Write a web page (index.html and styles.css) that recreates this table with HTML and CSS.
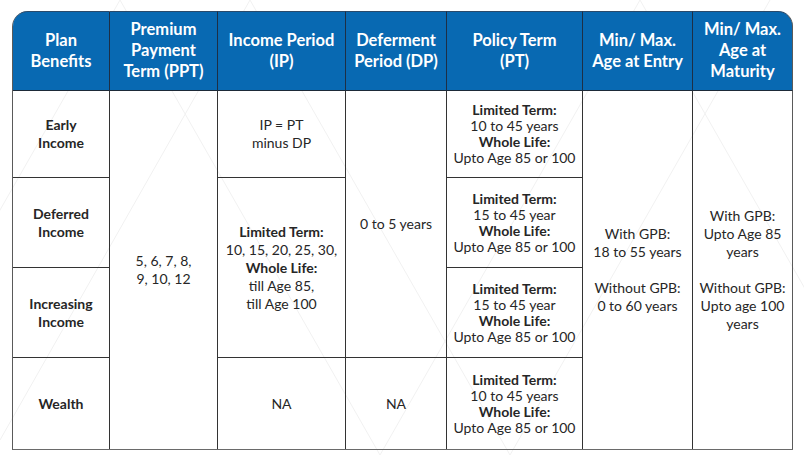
FILE: index.html
```html
<!DOCTYPE html>
<html lang="en">
<head>
<meta charset="utf-8">
<title>Plan Benefits</title>
<link rel="stylesheet" href="styles.css">
</head>
<body>
<div class="page">
  <svg class="bg-pattern" width="804" height="455" viewBox="0 0 804 455" aria-hidden="true">
    <g stroke="#f1f1f1" stroke-width="1" fill="none">
      <line x1="120" y1="0" x2="380" y2="455"/>
      <line x1="380" y1="455" x2="640" y2="0"/>
      <line x1="-140" y1="455" x2="120" y2="0"/>
      <line x1="640" y1="0" x2="900" y2="455"/>
      <line x1="250" y1="0" x2="0" y2="440"/>
      <line x1="250" y1="0" x2="510" y2="455"/>
      <line x1="510" y1="455" x2="770" y2="0"/>
    </g>
  </svg>
  <table class="plan">
    <colgroup>
      <col class="c1"><col class="c2"><col class="c3"><col class="c4"><col class="c5"><col class="c6"><col class="c7">
    </colgroup>
    <thead>
      <tr class="head">
        <th class="first">Plan<br>Benefits</th>
        <th>Premium<br>Payment<br>Term (PPT)</th>
        <th>Income Period<br>(IP)</th>
        <th>Deferment<br>Period (DP)</th>
        <th>Policy Term<br>(PT)</th>
        <th>Min/ Max.<br>Age at Entry</th>
        <th class="last">Min/ Max.<br>Age at<br>Maturity</th>
      </tr>
    </thead>
    <tbody>
      <tr class="r1">
        <td class="label">Early<br>Income</td>
        <td rowspan="4">5, 6, 7, 8,<br>9, 10, 12</td>
        <td>IP = PT<br>minus DP</td>
        <td rowspan="3">0 to 5 years</td>
        <td class="pt"><b>Limited Term:</b><br>10 to 45 years<br><b>Whole Life:</b><br>Upto Age 85 or 100</td>
        <td rowspan="4">With GPB:<br>18 to 55 years<br><br>Without GPB:<br>0 to 60 years</td>
        <td rowspan="4" class="lastcol">With GPB:<br>Upto Age 85<br>years<br><br>Without GPB:<br>Upto age 100<br>years</td>
      </tr>
      <tr class="r2">
        <td class="label">Deferred<br>Income</td>
        <td rowspan="2"><b>Limited Term:</b><br>10, 15, 20, 25, 30,<br><b>Whole Life:</b><br>till Age 85,<br>till Age 100</td>
        <td class="pt"><b>Limited Term:</b><br>15 to 45 year<br><b>Whole Life:</b><br>Upto Age 85 or 100</td>
      </tr>
      <tr class="r3">
        <td class="label">Increasing<br>Income</td>
        <td class="pt"><b>Limited Term:</b><br>15 to 45 year<br><b>Whole Life:</b><br>Upto Age 85 or 100</td>
      </tr>
      <tr class="r4">
        <td class="label">Wealth</td>
        <td>NA</td>
        <td>NA</td>
        <td class="pt"><b>Limited Term:</b><br>10 to 45 years<br><b>Whole Life:</b><br>Upto Age 85 or 100</td>
      </tr>
    </tbody>
  </table>
</div>
</body>
</html>
```

FILE: styles.css
```css
* { box-sizing: border-box; }

html, body {
  margin: 0;
  padding: 0;
  background: #ffffff;
}

.page {
  position: relative;
  width: 804px;
  height: 455px;
  padding: 11px 0 0 12px;
  font-family: Lato, "Noto Sans", sans-serif;
  color: #262626;
}

.bg-pattern {
  position: absolute;
  left: 0;
  top: 0;
  z-index: 0;
}

.plan {
  position: relative;
  z-index: 1;
  width: 780px;
  border-collapse: separate;
  border-spacing: 0;
  table-layout: fixed;
  border-left: 1.5px solid #5a5a5a;
  border-bottom: 1.5px solid #6a6a6a;
  border-top-left-radius: 16px;
  border-top-right-radius: 16px;
}

.c1 { width: 97px; }
.c2 { width: 108px; }
.c3 { width: 128px; }
.c4 { width: 101px; }
.c5 { width: 136px; }
.c6 { width: 110px; }
.c7 { width: 100px; }

.head th {
  height: 80px;
  background: #0869b2;
  color: #ffffff;
  font-weight: 700;
  font-size: 16.5px;
  line-height: 21px;
  text-align: center;
  vertical-align: middle;
  padding: 0 2px 1px;
  border-right: 1px solid #1d2f45;
  border-bottom: 1.5px solid #1d2a38;
  border-top: 1px solid #2a4a6a;
}

.head th.first {
  border-top-left-radius: 15px;
}

.head th.last {
  border-top-right-radius: 15px;
  border-right: 1.5px solid #5a5a5a;
}

.plan td {
  text-align: center;
  vertical-align: middle;
  font-size: 14px;
  line-height: 18px;
  padding: 0 2px;
  border-right: 1px solid #333333;
  border-bottom: 1px solid #333333;
}

.plan td.lastcol {
  border-right: 1.5px solid #5a5a5a;
}

.plan tbody tr:last-child td,
.plan td[rowspan="4"] {
  border-bottom: none;
}

.plan td.label {
  font-weight: 700;
}

.plan td.pt {
  line-height: 16px;
}

.plan td b {
  font-weight: 700;
}

.r1 td { height: 87px; }
.r2 td { height: 90px; }
.r3 td { height: 90px; }
.r4 td { height: 91px; }
.plan tbody tr.r4 td { border-bottom: none; }
```
